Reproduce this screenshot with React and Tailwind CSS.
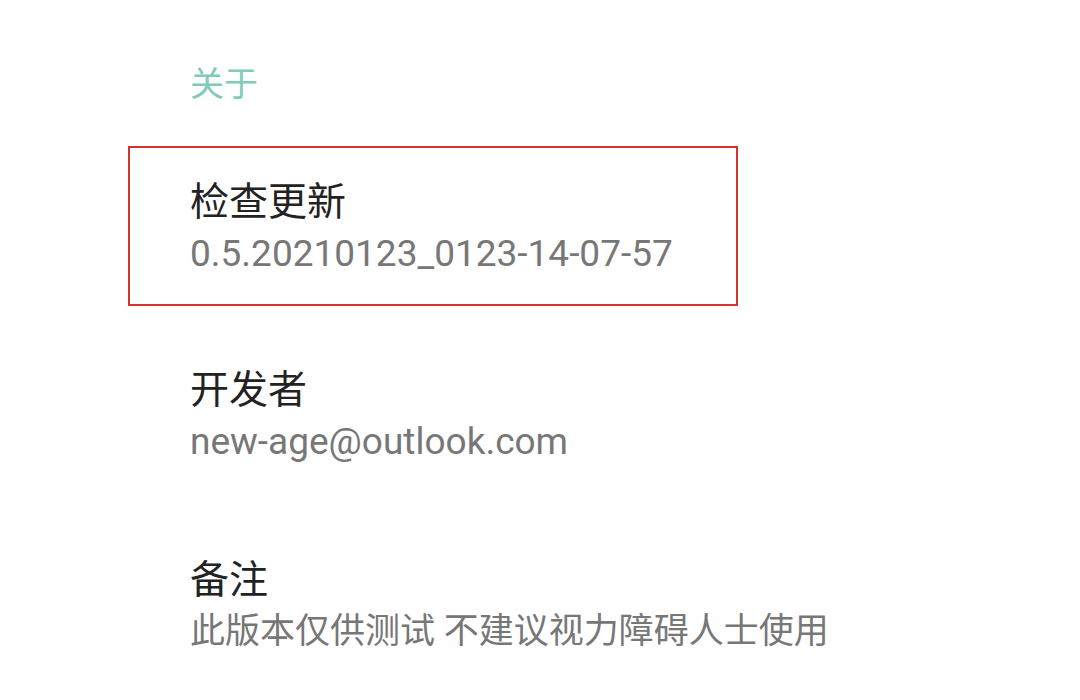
export default function App() {
  const font = { fontFamily: 'Roboto, "Noto Sans CJK SC", sans-serif' };
  return (
    <div className="w-[1080px] h-[700px] bg-white overflow-hidden" style={font}>
      <div className="pl-[190px] pt-[64px] text-[34px] leading-[40px] text-[#80cbb9]">关于</div>
      <div className="ml-[128px] mt-[42px] w-[610px] h-[160px] border-2 border-[#d8322f] pl-[60px] pt-[30px]">
        <div className="text-[39px] leading-[48px] text-[#222222]">检查更新</div>
        <div className="text-[37px] leading-[48px] text-[#777777] mt-[4px]">0.5.20210123_0123-14-07-57</div>
      </div>
      <div className="pl-[190px] mt-[60px]">
        <div className="text-[39px] leading-[48px] text-[#222222]">开发者</div>
        <div className="text-[37px] leading-[48px] text-[#777777] mt-[4px]">new-age@outlook.com</div>
      </div>
      <div className="pl-[190px] mt-[90px]">
        <div className="text-[39px] leading-[48px] text-[#222222]">备注</div>
        <div className="text-[35px] leading-[48px] text-[#777777] mt-[4px]">此版本仅供测试 不建议视力障碍人士使用</div>
      </div>
    </div>
  );
}
